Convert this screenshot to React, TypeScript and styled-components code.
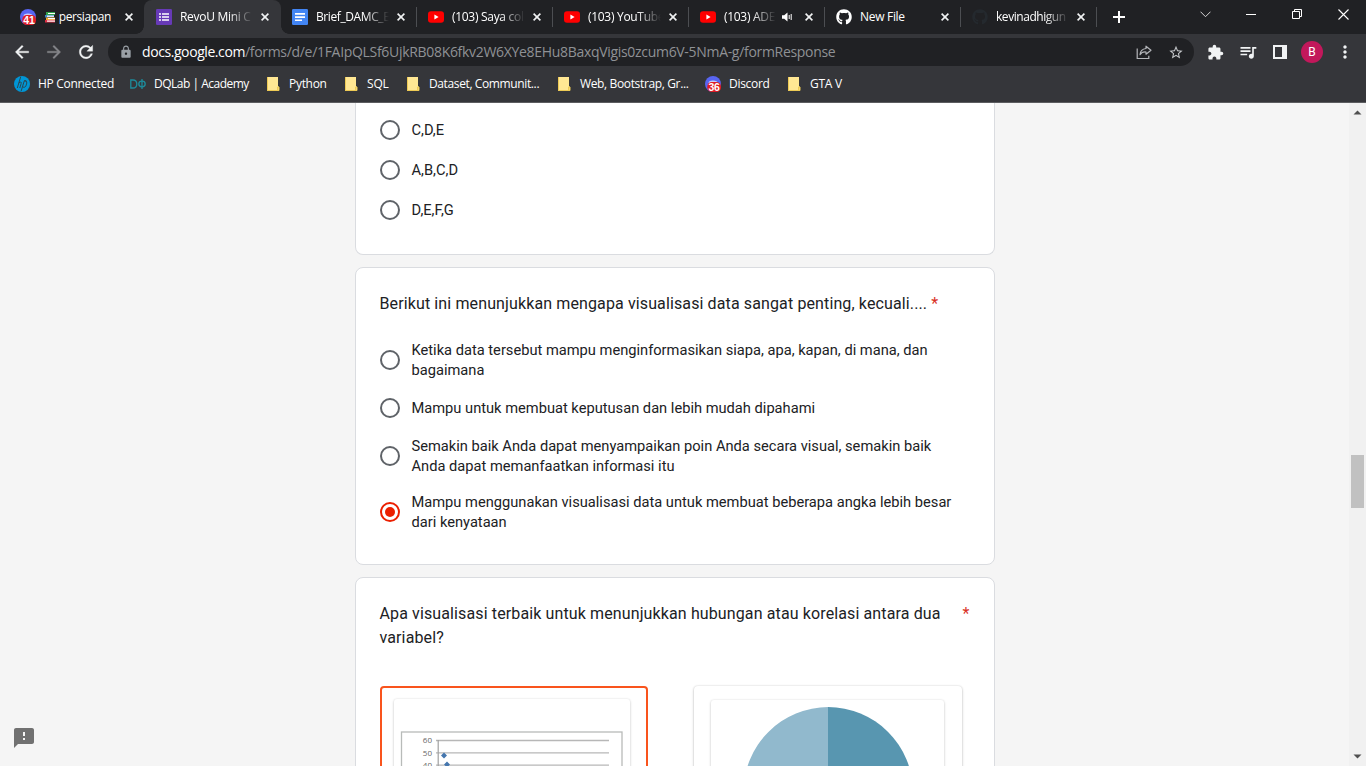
import React from "react";
import styled, { createGlobalStyle } from "styled-components";
import {
  MdArrowBack, MdArrowForward, MdRefresh, MdLock, MdStarBorder, MdExtension,
  MdQueueMusic, MdMoreVert, MdFeedback,
} from "react-icons/md";
import { FaGithub } from "react-icons/fa";

const GlobalStyle = createGlobalStyle`
  * { box-sizing: border-box; }
  body { margin: 0; overflow: hidden; background: #f5f5f5; }
`;

const Window = styled.div`
  display: flex;
  flex-direction: column;
  width: 1366px;
  height: 766px;
  overflow: hidden;
  position: relative;
  font-family: "Open Sans", "Noto Sans", sans-serif;
`;

const TabStrip = styled.div`
  display: flex;
  flex: none;
  height: 34px;
  padding-left: 8px;
  background: #202124;
`;

const Tab = styled.div<{ $active?: boolean; $divider?: boolean }>`
  display: flex;
  align-items: center;
  position: relative;
  width: 136px;
  height: 34px;
  padding-left: 12px;
  padding-right: 7px;
  color: #fff;
  background: ${(p) => (p.$active ? "#35363a" : "transparent")};
  border-radius: 8px 8px 0 0;
  ${(p) => p.$divider && `
    &::after {
      content: "";
      position: absolute;
      right: -1px;
      top: 7px;
      width: 1px;
      height: 20px;
      background: #4c4e52;
    }
  `}
  ${(p) => p.$active && `
    width: 137px;
    margin-right: -1px;
    padding-right: 8px;
    &::before, &::after {
      content: "";
      position: absolute;
      bottom: 0;
      width: 8px;
      height: 8px;
    }
    &::before { left: -8px; background: radial-gradient(circle at 0 0, #202124 7.5px, #35363a 8px); }
    &::after { right: -8px; background: radial-gradient(circle at 100% 0, #202124 7.5px, #35363a 8px); }
  `}
`;

const TabTitle = styled.div<{ $w: number; $fade?: boolean; $ls?: number }>`
  display: flex;
  align-items: center;
  width: ${(p) => p.$w}px;
  margin-left: 8px;
  font-size: 12px;
  line-height: 18px;
  letter-spacing: ${(p) => p.$ls ?? -0.3}px;
  white-space: nowrap;
  ${(p) => p.$fade && "mask-image: linear-gradient(to right, #000 calc(100% - 24px), transparent);"}
`;

const SoundSlot = styled.div`
  display: flex;
  margin-left: 6px;
`;

const CloseSlot = styled.div`
  display: flex;
  align-items: center;
  justify-content: center;
  width: 16px;
  height: 16px;
  margin-left: auto;
`;

const Controls = styled.div`
  display: flex;
  margin-left: auto;
  height: 28px;
`;

const Control = styled.div`
  display: flex;
  align-items: center;
  justify-content: center;
  width: 46px;
`;

const NewTab = styled.div`
  display: flex;
  align-items: center;
  width: 29px;
  padding-left: 17px;
`;

const Toolbar = styled.div`
  display: flex;
  align-items: center;
  flex: none;
  height: 36px;
  padding-left: 12px;
  background: #35363a;
  color: #f1f3f4;
  & > * { flex: none; }
`;

const NavButton = styled.div<{ $dim?: boolean }>`
  display: flex;
  width: 32px;
  color: ${(p) => (p.$dim ? "#85868a" : "#f1f3f4")};
  svg path:not([fill="none"]) { stroke: currentColor; stroke-width: 0.4px; }
`;

const AddressBar = styled.div`
  display: flex;
  align-items: center;
  width: 1086px;
  height: 28px;
  padding: 0 10px 0 11px;
  border-radius: 14px;
  background: #202124;
  color: #9aa0a6;
`;

const Url = styled.div`
  flex: 1;
  margin-left: 9px;
  font-size: 14px;
  line-height: 20px;
  letter-spacing: -0.31px;
  white-space: nowrap;
  color: #8f9195;
`;

const Host = styled.span`
  color: #fff;
  letter-spacing: -0.42px;
`;

const ToolButton = styled.div<{ $w: number }>`
  display: flex;
  align-items: center;
  justify-content: center;
  width: ${(p) => p.$w}px;
`;

const Avatar = styled.div`
  display: flex;
  align-items: center;
  justify-content: center;
  width: 22px;
  height: 22px;
  border-radius: 50%;
  background: #c2185b;
  color: #fff;
  font: 12px Roboto, sans-serif;
`;

const BookmarkBar = styled.div`
  display: flex;
  align-items: center;
  flex: none;
  height: 33px;
  padding: 0 14px;
  padding-bottom: 4px;
  background: #35363a;
  border-bottom: 1px solid #5c5d60;
`;

const Bookmark = styled.div<{ $w: number; $ls: number }>`
  display: flex;
  align-items: center;
  gap: 8px;
  width: ${(p) => p.$w}px;
  font-size: 12px;
  line-height: 16px;
  letter-spacing: ${(p) => p.$ls}px;
  white-space: nowrap;
  color: #fff;
`;

const Page = styled.div`
  display: flex;
  flex: 1;
  min-height: 0;
  background: #f5f5f5;
`;

const FormColumn = styled.main`
  flex: 1;
  display: flex;
  flex-direction: column;
  align-items: center;
  gap: 12px;
  overflow: hidden;
  font-family: Roboto, sans-serif;
  color: #202124;
`;

const Card = styled.section<{ $cut?: boolean }>`
  flex: none;
  width: 640px;
  padding: ${(p) => (p.$cut ? "7px 24px 24px" : "24px")};
  background: #fff;
  border: 1px solid #dadce0;
  border-radius: ${(p) => (p.$cut ? "0 0 8px 8px" : "8px")};
  ${(p) => p.$cut && "border-top: 0;"}
`;

const Question = styled.div`
  display: flex;
  margin-bottom: 16px;
  font-size: 16px;
  line-height: 24px;
  letter-spacing: 0.12px;
`;

const Star = styled.span`
  margin-left: 4px;
  color: #d93025;
`;

const Option = styled.div<{ $tall?: boolean }>`
  display: flex;
  align-items: center;
  gap: 12px;
  height: ${(p) => (p.$tall ? 56 : 40)}px;
  padding-right: 16px;
  font-size: 11pt;
  line-height: 20px;
`;

const Radio = styled.span<{ $on?: boolean }>`
  display: flex;
  align-items: center;
  justify-content: center;
  flex: none;
  width: 20px;
  height: 20px;
  border: 2px solid ${(p) => (p.$on ? "#eb1f00" : "#5f6368")};
  border-radius: 50%;
  &::after {
    content: "";
    width: 10px;
    height: 10px;
    border-radius: 50%;
    background: ${(p) => (p.$on ? "#eb1f00" : "transparent")};
  }
`;

const ImageRow = styled.div`
  display: flex;
  gap: 46px;
  margin-top: 36px;
  height: 260px;
`;

const ImageOption = styled.div<{ $on?: boolean }>`
  width: 268px;
  border-radius: 4px;
  padding: ${(p) => (p.$on ? "11px 16px 0 12px" : "14px 18px 0 17px")};
  ${(p) => (p.$on ? "border: 2px solid #f9541d;" : "box-shadow: 0 0 2px rgba(0,0,0,.14), 0 1px 3px rgba(0,0,0,.22);")}
`;

const Thumb = styled.div`
  height: 240px;
  border-radius: 3px;
  overflow: hidden;
  box-shadow: 0 0 2px rgba(0, 0, 0, 0.1), 0 1px 3px rgba(0, 0, 0, 0.18);
`;

const ScrollBar = styled.div`
  display: flex;
  flex-direction: column;
  align-items: center;
  width: 17px;
  padding: 7px 0;
  background: #f1f1f1;
`;

const ScrollThumb = styled.div`
  width: 13px;
  height: 53px;
  margin: 340px 0 auto;
  background: #c1c1c1;
`;

const Feedback = styled.div`
  position: absolute;
  left: 12px;
  bottom: 16px;
  display: flex;
  color: #717171;
`;

const Cross = () => (
  <svg width="8" height="8" viewBox="0 0 8 8"><path d="M.6.6 7.4 7.4M7.4.6.6 7.4" stroke="#f1f3f4" strokeWidth="1.6" /></svg>
);

const DiscordIcon = ({ count }: { count: string }) => (
  <svg width="16" height="16" viewBox="0 0 16 16">
    <circle cx="8" cy="8" r="8" fill="#5865f2" />
    <path d="M4 5.6Q8 3.4 12 5.6L12.6 8H3.4Z" fill="#c9cdfb" />
    <rect x="2.3" y="6" width="13.7" height="10" rx="4.6" fill="#e01b24" />
    <text x="9.1" y="14.6" fontSize="10.5" fontWeight="700" fontFamily="Liberation Sans, sans-serif" textAnchor="middle" fill="#fff">{count}</text>
  </svg>
);

const YouTubeIcon = () => (
  <svg width="16" height="16" viewBox="0 0 16 16">
    <rect y="2.2" width="16" height="11.6" rx="3" fill="#f00" />
    <path d="M6.4 5.6 10.6 8 6.4 10.4Z" fill="#fff" />
  </svg>
);

const FormsIcon = () => (
  <svg width="16" height="16" viewBox="0 0 16 16">
    <rect width="16" height="16" rx="1.2" fill="#673ab7" />
    <path d="M3 4.2h2v1.6H3zM6 4.2h7v1.6H6zM3 7.2h2v1.6H3zM6 7.2h7v1.6H6zM3 10.2h2v1.6H3zM6 10.2h7v1.6H6z" fill="#fff" />
  </svg>
);

const DocsIcon = () => (
  <svg width="16" height="16" viewBox="0 0 16 16">
    <rect width="16" height="16" rx="1.2" fill="#4285f4" />
    <path d="M3 4h10v1.7H3zM3 7.2h10v1.7H3zM3 10.4h7v1.7H3z" fill="#fff" />
  </svg>
);

const BooksIcon = () => (
  <svg width="12" height="12" viewBox="0 0 12 12">
    <rect x="2" y="1" width="9" height="3" fill="#2fa24a" /><rect x="4" y="2" width="7" height="1" fill="#fff" />
    <rect x="1" y="4" width="9" height="2.5" fill="#3b88c3" /><rect x="3" y="4.6" width="7" height="1.2" fill="#fff" />
    <rect x="2" y="6.5" width="9" height="2.5" fill="#f4a62a" /><rect x="4" y="7" width="7" height="1.2" fill="#fff" />
    <rect x="1" y="9" width="10" height="2.5" fill="#dd2e44" /><rect x="3" y="9.5" width="8" height="1.2" fill="#fff" />
  </svg>
);

const SpeakerIcon = () => (
  <svg width="11" height="10" viewBox="0 0 11 10">
    <path d="M0 3.2h2.2L5.5.6v8.8L2.2 6.8H0Z" fill="#fff" />
    <path d="M7.2 3v4M9.2 2v6" stroke="#fff" strokeWidth="1" />
  </svg>
);

const HpIcon = () => (
  <svg width="16" height="16" viewBox="0 0 16 16">
    <circle cx="8" cy="8" r="8" fill="#0096d6" />
    <path d="M6.7.8 3.3 12M4.8 7Q7.7 4.8 7.2 7.4L5.8 12M12.2 4.8H10.3L7.1 15.2M10.3 4.8Q13.3 4.5 12.8 7L11.8 10.3Q11.2 11.5 9 11.2" fill="none" stroke="#2b4652" strokeWidth="1" />
  </svg>
);

const DqIcon = () => (
  <svg width="16" height="16" viewBox="0 0 16 16">
    <path d="M.8 4v8H3Q6.8 12 6.8 8T3 4ZM12 3v10" fill="none" stroke="#1d8c9c" strokeWidth="1.3" />
    <ellipse cx="12" cy="8" rx="3.2" ry="2.8" fill="none" stroke="#1d8c9c" strokeWidth="1.3" />
  </svg>
);

const FolderIcon = () => (
  <svg width="16" height="16" viewBox="0 0 16 16">
    <path d="M2 1h11v9.5h1V15H2Z" fill="#ffe793" />
    <path d="M2.5 1v14M12.5 15v-4H14v3.5H2" fill="none" stroke="#edca55" />
  </svg>
);

const ShareIcon = () => (
  <svg width="16" height="16" viewBox="0 0 16 16" fill="none" stroke="#b4b6ba" strokeWidth="1.2">
    <path d="M1.2 4.5v10h11.6v-2.7" />
    <path d="M10 2.2 15 6.2 10 10.2V8Q6 7.6 4 10.7 4.5 5 10 4.5Z" strokeLinejoin="round" />
  </svg>
);

const Arrow = ({ down }: { down?: boolean }) => (
  <svg width="9" height="5" viewBox="0 0 9 5"><path d={down ? "M.5.5h8l-4 4Z" : "M.5 4.5h8l-4-4Z"} fill="#505050" /></svg>
);

const ScatterChart = () => (
  <svg width="236" height="240" viewBox="0 0 236 240">
    <rect x="7.5" y="33" width="220.5" height="190" fill="#fff" stroke="#b8bbb9" strokeWidth="1.3" />
    {[60, 50, 40].map((n, i) => (
      <g key={n}>
        <path d={`M42 ${41.5 + i * 12.3}h173`} stroke="#b7b7b7" strokeWidth="1.3" />
        <text x="38" y={44.3 + i * 12.3} fontSize="8" fontFamily="Open Sans, sans-serif" textAnchor="end" fill="#666">{n}</text>
      </g>
    ))}
    <path d="M44.2 41v100" stroke="#a0a0a0" strokeWidth="1.2" />
    <path d="M50 53.5 53 56.5 50 59.5 47 56.5ZM53 62.5 56 65.5 53 68.5 50 65.5Z" fill="#4576ae" />
  </svg>
);

const PieChart = () => (
  <svg width="233" height="240" viewBox="0 0 233 240">
    <path d="M117.5 7a85 85 0 0 0 0 170Z" fill="#91b9cd" />
    <path d="M117 7a85 85 0 0 1 0 170Z" fill="#5896b0" />
  </svg>
);

type TabSpec = {
  icon: React.ReactNode;
  title: React.ReactNode;
  active?: boolean;
  divider?: boolean;
  fade?: boolean;
  sound?: boolean;
  spacing?: number;
};

const tabs: TabSpec[] = [
  { icon: <DiscordIcon count="41" />, title: <><BooksIcon />&nbsp;persiapan</>, spacing: -0.4 },
  { icon: <FormsIcon />, title: "RevoU Mini C", active: true, fade: true },
  { icon: <DocsIcon />, title: "Brief_DAMC_E", divider: true, fade: true, spacing: -0.4 },
  { icon: <YouTubeIcon />, title: "(103) Saya col", divider: true, fade: true },
  { icon: <YouTubeIcon />, title: "(103) YouTube", divider: true, fade: true },
  { icon: <YouTubeIcon />, title: "(103) ADE", divider: true, fade: true, sound: true },
  { icon: <FaGithub size={16} color="#fff" />, title: "New File", divider: true },
  { icon: <FaGithub size={16} color="#24292e" />, title: "kevinadhigun", divider: true, fade: true, spacing: -0.45 },
];

const bookmarks: [React.ReactNode, string, number, number][] = [
  [<HpIcon />, "HP Connected", 116, -0.3],
  [<DqIcon />, "DQLab | Academy", 135, -0.5],
  [<FolderIcon />, "Python", 78, -0.3],
  [<FolderIcon />, "SQL", 62, -0.2],
  [<FolderIcon />, "Dataset, Communit...", 151, -0.38],
  [<FolderIcon />, "Web, Bootstrap, Gr...", 149, -0.36],
  [<DiscordIcon count="36" />, "Discord", 81, -0.3],
  [<FolderIcon />, "GTA V", 70, -0.25],
];

export default function App() {
  return (
    <Window>
      <GlobalStyle />
      <TabStrip>
        {tabs.map((t, i) => (
          <Tab key={i} $active={t.active} $divider={t.divider}>
            {t.icon}
            <TabTitle $w={t.sound ? 52 : 73} $fade={t.fade} $ls={t.spacing}>{t.title}</TabTitle>
            {t.sound && <SoundSlot><SpeakerIcon /></SoundSlot>}
            <CloseSlot><Cross /></CloseSlot>
          </Tab>
        ))}
        <NewTab>
          <svg width="12" height="12" viewBox="0 0 12 12"><path d="M6 0v12M0 6h12" stroke="#fff" strokeWidth="2" /></svg>
        </NewTab>
        <Controls>
          <Control><svg width="11" height="7" viewBox="0 0 11 7"><path d="M.5.7l5 5 5-5" fill="none" stroke="#d5d5d6" /></svg></Control>
          <Control><svg width="10" height="1"><path d="M0 .5h10" stroke="#fff" /></svg></Control>
          <Control><svg width="10" height="10" viewBox="0 0 10 10"><path d="M.5 2.5h7v7h-7zM2.5 2.5v-2h7v7h-2" fill="none" stroke="#fff" /></svg></Control>
          <Control><svg width="11" height="11" viewBox="0 0 11 11"><path d="M.5.5l10 10M10.5.5l-10 10" stroke="#fff" strokeWidth="1.1" /></svg></Control>
        </Controls>
      </TabStrip>
      <Toolbar>
        <NavButton><MdArrowBack size={20} /></NavButton>
        <NavButton $dim><MdArrowForward size={20} /></NavButton>
        <NavButton><MdRefresh size={20} /></NavButton>
        <AddressBar>
          <MdLock size={14} />
          <Url><Host>docs.google.com</Host>/forms/d/e/1FAIpQLSf6UjkRB08K6fkv2W6XYe8EHu8BaxqVigis0zcum6V-5NmA-g/formResponse</Url>
          <ToolButton $w={48}><ShareIcon /></ToolButton>
          <ToolButton $w={16}><MdStarBorder size={17} color="#c4c7ca" /></ToolButton>
        </AddressBar>
        <ToolButton $w={43}><MdExtension size={17} /></ToolButton>
        <ToolButton $w={22}><MdQueueMusic size={20} /></ToolButton>
        <ToolButton $w={42}>
          <svg width="14" height="14" viewBox="0 0 14 14"><path d="M0 0h14v14H0ZM2 2v10h7V2Z" fill="#f1f3f4" fillRule="evenodd" /></svg>
        </ToolButton>
        <Avatar>B</Avatar>
        <ToolButton $w={43}><MdMoreVert size={20} /></ToolButton>
      </Toolbar>
      <BookmarkBar>
        {bookmarks.map(([icon, label, w, ls]) => (
          <Bookmark key={label} $w={w} $ls={ls}>{icon}<span>{label}</span></Bookmark>
        ))}
      </BookmarkBar>
      <Page>
        <FormColumn>
          <Card $cut>
            <Option><Radio />C,D,E</Option>
            <Option><Radio />A,B,C,D</Option>
            <Option><Radio />D,E,F,G</Option>
          </Card>
          <Card>
            <Question><span>Berikut ini menunjukkan mengapa visualisasi data sangat penting, kecuali....</span><Star>*</Star></Question>
            <Option $tall><Radio />Ketika data tersebut mampu menginformasikan siapa, apa, kapan, di mana, dan bagaimana</Option>
            <Option><Radio />Mampu untuk membuat keputusan dan lebih mudah dipahami</Option>
            <Option $tall><Radio />Semakin baik Anda dapat menyampaikan poin Anda secara visual, semakin baik Anda dapat memanfaatkan informasi itu</Option>
            <Option $tall><Radio $on />Mampu menggunakan visualisasi data untuk membuat beberapa angka lebih besar dari kenyataan</Option>
          </Card>
          <Card>
            <Question><span>Apa visualisasi terbaik untuk menunjukkan hubungan atau korelasi antara dua variabel?</span><Star>*</Star></Question>
            <ImageRow>
              <ImageOption $on><Thumb><ScatterChart /></Thumb></ImageOption>
              <ImageOption><Thumb><PieChart /></Thumb></ImageOption>
            </ImageRow>
          </Card>
        </FormColumn>
        <ScrollBar>
          <Arrow />
          <ScrollThumb />
          <Arrow down />
        </ScrollBar>
      </Page>
      <Feedback><MdFeedback size={24} /></Feedback>
    </Window>
  );
}
